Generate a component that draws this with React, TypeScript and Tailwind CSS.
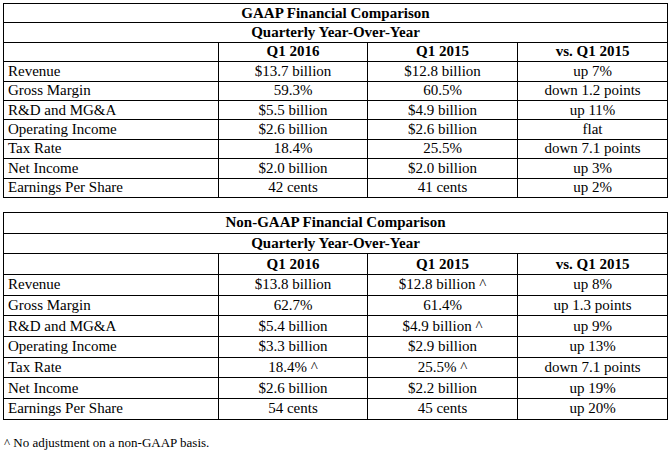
import React from "react";

type Row = [string, string, string, string];

const gaap: Row[] = [
  ["Revenue", "$13.7 billion", "$12.8 billion", "up 7%"],
  ["Gross Margin", "59.3%", "60.5%", "down 1.2 points"],
  ["R&D and MG&A", "$5.5 billion", "$4.9 billion", "up 11%"],
  ["Operating Income", "$2.6 billion", "$2.6 billion", "flat"],
  ["Tax Rate", "18.4%", "25.5%", "down 7.1 points"],
  ["Net Income", "$2.0 billion", "$2.0 billion", "up 3%"],
  ["Earnings Per Share", "42 cents", "41 cents", "up 2%"],
];

const nonGaap: Row[] = [
  ["Revenue", "$13.8 billion", "$12.8 billion ^", "up 8%"],
  ["Gross Margin", "62.7%", "61.4%", "up 1.3 points"],
  ["R&D and MG&A", "$5.4 billion", "$4.9 billion ^", "up 9%"],
  ["Operating Income", "$3.3 billion", "$2.9 billion", "up 13%"],
  ["Tax Rate", "18.4% ^", "25.5% ^", "down 7.1 points"],
  ["Net Income", "$2.6 billion", "$2.2 billion", "up 19%"],
  ["Earnings Per Share", "54 cents", "45 cents", "up 20%"],
];

function Table({
  title,
  rows,
  rowH,
}: {
  title: string;
  rows: Row[];
  rowH: string;
}) {
  const cell = "border border-black p-0 leading-none";
  return (
    <table className="border-collapse border border-black w-[664px] table-fixed">
      <colgroup>
        <col className="w-[215px]" />
        <col className="w-[149px]" />
        <col className="w-[150px]" />
        <col className="w-[150px]" />
      </colgroup>
      <tbody>
        <tr className={rowH}>
          <td colSpan={4} className={`${cell} text-center font-bold`}>
            {title}
          </td>
        </tr>
        <tr className={rowH}>
          <td colSpan={4} className={`${cell} text-center font-bold`}>
            Quarterly Year-Over-Year
          </td>
        </tr>
        <tr className={rowH}>
          <td className={cell}></td>
          <td className={`${cell} text-center font-bold`}>Q1 2016</td>
          <td className={`${cell} text-center font-bold`}>Q1 2015</td>
          <td className={`${cell} text-center font-bold`}>vs. Q1 2015</td>
        </tr>
        {rows.map((r) => (
          <tr key={r[0]} className={rowH}>
            <td className={`${cell} pl-[4px] text-left`}>{r[0]}</td>
            <td className={`${cell} text-center`}>{r[1]}</td>
            <td className={`${cell} text-center`}>{r[2]}</td>
            <td className={`${cell} text-center`}>{r[3]}</td>
          </tr>
        ))}
      </tbody>
    </table>
  );
}

export default function App() {
  return (
    <div
      className="w-[670px] h-[451px] bg-white text-black text-[15px] pl-[3px] pt-[3px]"
      style={{ fontFamily: '"Liberation Serif", "Times New Roman", serif' }}
    >
      <Table title="GAAP Financial Comparison" rows={gaap} rowH="h-[19.4px]" />
      <div className="h-[14px]" />
      <Table title="Non-GAAP Financial Comparison" rows={nonGaap} rowH="h-[20.7px]" />
      <div className="mt-[16px] pl-[1px] text-[13px] leading-none">
        ^ No adjustment on a non-GAAP basis.
      </div>
    </div>
  );
}
